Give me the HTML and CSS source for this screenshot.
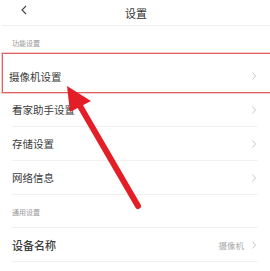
FILE: index.html
```html
<!DOCTYPE html>
<html lang="zh-CN">
<head>
    <meta charset="UTF-8">
    <meta name="viewport" content="width=device-width, initial-scale=1.0">
    <title>设置</title>
    <link rel="stylesheet" href="styles.css">
</head>
<body>
    <div class="page">
        <div class="header">
            <svg class="back" width="8" height="10" viewBox="0 0 8 10">
                <polyline points="6,1 2,5 6,9" fill="none" stroke="#444" stroke-width="1.1"/>
            </svg>
            <span class="title">设置</span>
        </div>

        <div class="list">
            <div class="section">功能设置</div>
            <div class="row first">
                <span class="name">摄像机设置</span>
                <svg class="chev" width="6" height="8" viewBox="0 0 6 8"><polyline points="1.5,0.5 4.5,4 1.5,7.5" fill="none" stroke="#c8c8c8" stroke-width="1"/></svg>
            </div>
            <div class="row">
                <span class="name">看家助手设置</span>
                <svg class="chev" width="6" height="8" viewBox="0 0 6 8"><polyline points="1.5,0.5 4.5,4 1.5,7.5" fill="none" stroke="#c8c8c8" stroke-width="1"/></svg>
            </div>
            <div class="row">
                <span class="name">存储设置</span>
                <svg class="chev" width="6" height="8" viewBox="0 0 6 8"><polyline points="1.5,0.5 4.5,4 1.5,7.5" fill="none" stroke="#c8c8c8" stroke-width="1"/></svg>
            </div>
            <div class="row">
                <span class="name">网络信息</span>
                <svg class="chev" width="6" height="8" viewBox="0 0 6 8"><polyline points="1.5,0.5 4.5,4 1.5,7.5" fill="none" stroke="#c8c8c8" stroke-width="1"/></svg>
            </div>
            <div class="section line">通用设置</div>
            <div class="row">
                <span class="name bold">设备名称</span>
                <span class="value">摄像机</span>
                <svg class="chev" width="6" height="8" viewBox="0 0 6 8"><polyline points="1.5,0.5 4.5,4 1.5,7.5" fill="none" stroke="#c8c8c8" stroke-width="1"/></svg>
            </div>
        </div>

        <!-- annotation drawn over the screenshot -->
        <div class="mark"></div>
        <svg class="arrow" width="270" height="271" viewBox="0 0 270 271">
            <line x1="138" y1="206" x2="80" y2="106" stroke="#e41e26" stroke-width="6" stroke-linecap="round"/>
            <polygon points="67,86 91,101 70,112" fill="#e41e26"/>
        </svg>
    </div>
</body>
</html>
```

FILE: styles.css
```css
body {
    margin: 0;
    padding: 0;
    background: #fff;
    font-family: "Noto Sans CJK SC", "Noto Sans", sans-serif;
    color: #3c3c3c;
}

.page {
    position: relative;
    width: 270px;
    height: 271px;
    overflow: hidden;
}

.header {
    height: 25px;
    border-bottom: 1px solid #efefef;
    margin-left: 2px;
    display: flex;
    align-items: center;
    justify-content: center;
    position: relative;
}

.back {
    position: absolute;
    left: 18px;
    top: 5px;
}

.title {
    font-size: 11px;
    color: #333;
}

.list {
    padding: 0 12px;
}

.section {
    height: 33px;
    display: flex;
    align-items: center;
    font-size: 7px;
    color: #999;
    padding-top: 1px;
    box-sizing: border-box;
}

.section.line {
    border-bottom: 1px solid #f0f0f0;
}

.row {
    height: 33px;
    display: flex;
    align-items: center;
    border-bottom: 1px solid #f0f0f0;
}

.row.first {
    height: 34px;
    border-bottom: none;
    margin-left: -3px;
}

.name {
    flex: 1;
    font-size: 10.5px;
}

.name.bold {
    font-size: 11px;
    font-weight: 500;
}

.value {
    font-size: 8.5px;
    color: #aaa;
    margin-right: 7px;
}

.chev {
    margin-right: 1px;
}

.mark {
    position: absolute;
    left: 2px;
    top: 53px;
    width: 280px;
    height: 38px;
    border: 1px solid #e36060;
    box-shadow: 0 0 0 1px rgba(235, 140, 140, 0.45);
}

.arrow {
    position: absolute;
    left: 0;
    top: 0;
}
```
